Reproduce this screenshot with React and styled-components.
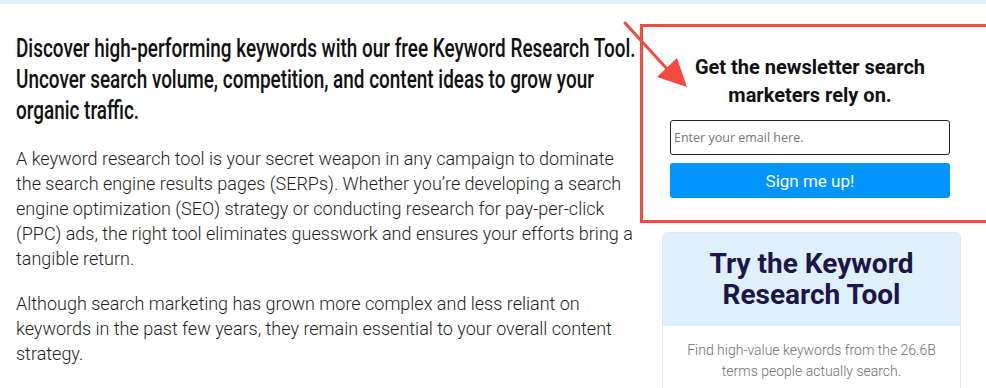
import React from "react";
import styled, { createGlobalStyle } from "styled-components";

const Global = createGlobalStyle`
  html, body { margin: 0; padding: 0; background: #fff; overflow: hidden; }
  body { width: 986px; height: 388px; }
  * { box-sizing: border-box; }
`;

const Page = styled.div`
  position: relative;
  width: 986px;
  height: 388px;
  overflow: hidden;
  border-top: 4px solid #e2f0fa;
`;

const Layout = styled.div`
  display: flex;
  align-items: flex-start;
`;

const Main = styled.main`
  width: 640px;
  flex-shrink: 0;
  padding: 29px 0 0 16px;
`;

const Lead = styled.h2`
  margin: 0 0 20px;
  font-family: Roboto, "Liberation Sans", sans-serif;
  font-weight: 500;
  font-size: 25px;
  line-height: 31px;
  color: #111;
`;

const Line = styled.span`
  display: block;
  white-space: nowrap;
`;

const LeadLine = styled(Line)`
  transform: scaleX(${(p) => p.$scale});
  transform-origin: left center;
`;

const Para = styled.p`
  margin: 0 0 20px;
  font-family: Roboto, "Liberation Sans", sans-serif;
  font-weight: 300;
  font-size: 18px;
  line-height: 25px;
  color: #1e1e1e;
`;

const Side = styled.aside`
  flex-shrink: 0;
  display: flex;
  flex-direction: column;
  padding-top: 20px;
`;

const Newsletter = styled.section`
  width: 370px;
  border: 3px solid #f44a40;
  padding: 26px 0 22px 27px;
`;

const NewsInner = styled.div`
  width: 280px;
  display: flex;
  flex-direction: column;
  align-items: stretch;
`;

const NewsTitle = styled.h3`
  margin: 0 0 11px;
  text-align: center;
  font-family: Roboto, "Liberation Sans", sans-serif;
  font-weight: 700;
  font-size: 20px;
  line-height: 28px;
  color: #111;
`;

const Email = styled.input`
  height: 35px;
  border: 1px solid #222;
  border-radius: 3px;
  padding: 0 3px;
  font-family: "Open Sans", "Liberation Sans", sans-serif;
  font-size: 12.5px;
  color: #333;
  margin-bottom: 8px;
  &::placeholder { color: #777; }
`;

const SignUp = styled.button`
  height: 35px;
  border: none;
  border-radius: 3px;
  background: #0094ff;
  color: #fff;
  font-family: Roboto, "Liberation Sans", sans-serif;
  font-size: 17px;
  font-weight: 400;
  cursor: pointer;
`;

const Card = styled.section`
  margin: 9px 0 0 22px;
  width: 299px;
  border: 1px solid #e3e6ea;
  border-radius: 5px;
  overflow: hidden;
  background: #fff;
`;

const CardHead = styled.div`
  background: #dff0fd;
  padding: 15px 10px 16px;
  text-align: center;
  font-family: Roboto, "Liberation Sans", sans-serif;
  font-weight: 700;
  font-size: 28px;
  line-height: 31px;
  color: #1d1547;
`;

const CardBody = styled.p`
  margin: 0;
  padding: 14px 16px 20px;
  text-align: center;
  font-family: Roboto, "Liberation Sans", sans-serif;
  font-weight: 300;
  font-size: 14px;
  line-height: 21px;
  color: #6f6f6f;
`;

const Arrow = styled.svg`
  position: absolute;
  left: 0;
  top: 0;
  pointer-events: none;
`;

const S = 0.757;

export default function App() {
  return (
    <>
      <Global />
      <Page>
        <Layout>
          <Main>
            <Lead>
              <LeadLine $scale={S}>Discover high-performing keywords with our free Keyword Research Tool.</LeadLine>
              <LeadLine $scale={S}>Uncover search volume, competition, and content ideas to grow your</LeadLine>
              <LeadLine $scale={S}>organic traffic.</LeadLine>
            </Lead>
            <Para>
              <Line>A keyword research tool is your secret weapon in any campaign to dominate</Line>
              <Line>the search engine results pages (SERPs). Whether you’re developing a search</Line>
              <Line>engine optimization (SEO) strategy or conducting research for pay-per-click</Line>
              <Line>(PPC) ads, the right tool eliminates guesswork and ensures your efforts bring a</Line>
              <Line>tangible return.</Line>
            </Para>
            <Para>
              <Line>Although search marketing has grown more complex and less reliant on</Line>
              <Line>keywords in the past few years, they remain essential to your overall content</Line>
              <Line>strategy.</Line>
            </Para>
          </Main>
          <Side>
            <Newsletter>
              <NewsInner>
                <NewsTitle>
                  Get the newsletter search
                  <br />
                  marketers rely on.
                </NewsTitle>
                <Email type="email" placeholder="Enter your email here." />
                <SignUp type="button">Sign me up!</SignUp>
              </NewsInner>
            </Newsletter>
            <Card>
              <CardHead>
                Try the Keyword
                <br />
                Research Tool
              </CardHead>
              <CardBody>
                Find high-value keywords from the 26.6B terms people actually search.
              </CardBody>
            </Card>
          </Side>
        </Layout>
        <Arrow width="986" height="388" viewBox="0 0 986 388">
          <line x1="625" y1="19" x2="668" y2="66" stroke="#f44a40" strokeWidth="3" strokeLinecap="round" />
          <polygon points="657,73 677,54 687,83" fill="#f44a40" />
        </Arrow>
      </Page>
    </>
  );
}
